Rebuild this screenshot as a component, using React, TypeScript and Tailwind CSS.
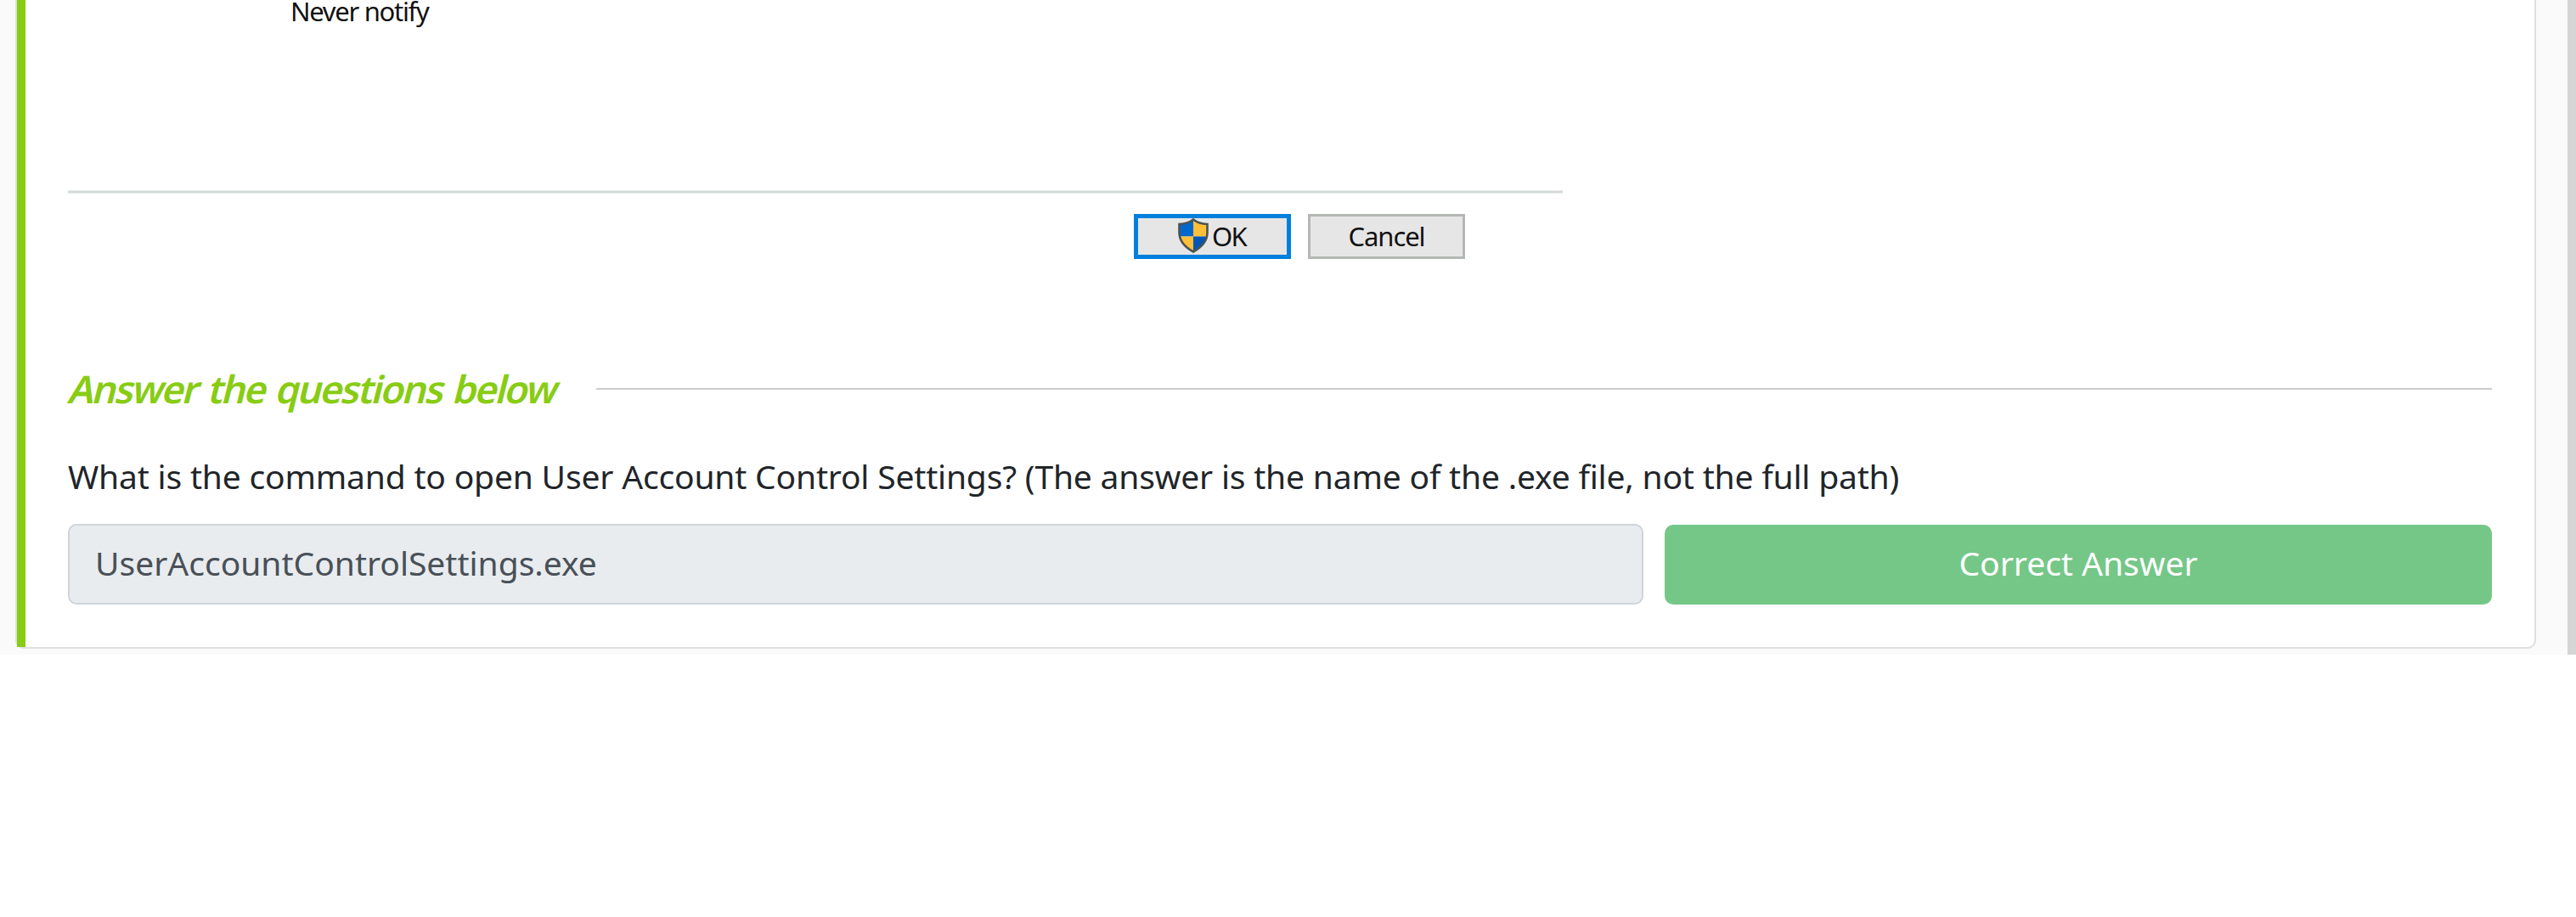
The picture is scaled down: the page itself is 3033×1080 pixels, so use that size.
function Shield() {
  return (
    <svg viewBox="0 0 36 41" className="mb-[3px] h-[41px] w-9 shrink-0">
      <defs>
        <clipPath id="shield">
          <path d="M18 1.5C23 5.5 28 6.8 34.5 7V17C34.5 27 28 34 18 39.5C8 34 1.5 27 1.5 17V7C8 6.8 13 5.5 18 1.5Z" />
        </clipPath>
      </defs>
      <g clipPath="url(#shield)">
        <path fill="#0068cc" d="M0 0h18v21.5H0z" />
        <path fill="#ffbf37" d="M18 0h18v21.5H18z" />
        <path fill="#ffbf37" d="M0 21.5h18V41H0z" />
        <path fill="#0057b8" d="M18 21.5h18V41H18z" />
      </g>
      <path
        d="M18 1.5C23 5.5 28 6.8 34.5 7V17C34.5 27 28 34 18 39.5C8 34 1.5 27 1.5 17V7C8 6.8 13 5.5 18 1.5Z"
        fill="none"
        stroke="#4b5354"
        strokeWidth="2.6"
      />
    </svg>
  );
}

function SettingsDialog() {
  return (
    <div className="flex h-[340px] w-[1760px] flex-col text-[31px] leading-[43px] text-[#111]">
      <div className="h-[224px] pl-[262px]">
        <span className="block whitespace-nowrap leading-[26px] tracking-[-1.3px]">Never notify</span>
      </div>
      <div className="h-1 shrink-0 border-y border-[#e9eceb] bg-[#d2d9d7]" />
      <div className="mt-6 flex justify-end gap-5 pr-[115px]">
        <button className="flex h-[53px] w-[185px] items-center border-[5px] border-[#0080dc] bg-[#e6e6e6] pl-[47px]">
          <Shield />
          <span className="ml-[4px] tracking-[-1.8px]">OK</span>
        </button>
        <button className="flex h-[53px] w-[185px] items-center justify-center border-[3px] border-[#b3b8b3] bg-[#e6e6e6]">
          <span className="tracking-[-1.1px]">Cancel</span>
        </button>
      </div>
    </div>
  );
}

export default function App() {
  return (
    <div className="h-[1080px] overflow-hidden bg-white font-['Noto_Sans',sans-serif]">
      <div className="flex h-[771px] justify-between bg-[#fafafa] pl-[18px]">
        <main className="flex h-[764px] w-[2968px] rounded-b-[10px] border-x-2 border-b-2 border-[#dfdfdf] bg-white">
          <div className="w-[10px] shrink-0 bg-[#88cc14]" />
          <div className="w-[2904px] shrink-0 pl-[50px]">
            <SettingsDialog />
            <div className="mt-[84px] flex h-[68px] items-center justify-between">
              <h2 className="ml-[3px] -skew-x-[14deg] whitespace-nowrap text-[45px] font-semibold tracking-[-2.1px] [word-spacing:3px] text-[#88cc14]">
                Answer the questions below
              </h2>
              <div className="h-0.5 w-[2232px] bg-[#cbcbcb]" />
            </div>
            <p className="mt-[39px] whitespace-nowrap text-[39px] leading-[60px] tracking-[-0.18px] text-[#212529]">
              What is the command to open User Account Control Settings? (The answer is the name of the .exe file, not the full path)
            </p>
            <div className="mt-[26px] flex items-end gap-[25px]">
              <div className="flex h-[95px] w-[1855px] items-center rounded-[10px] border-2 border-[#ced4da] bg-[#e8ecef] pb-[2px] pl-[30px] text-[39px] text-[#495057]">
                UserAccountControlSettings.exe
              </div>
              <button className="h-[94px] w-[974px] rounded-[10px] bg-[#75c788] pb-[3px] text-[39px] text-white">
                Correct Answer
              </button>
            </div>
          </div>
        </main>
        <div className="w-[10px] bg-[#d5d5d5]" />
      </div>
    </div>
  );
}
